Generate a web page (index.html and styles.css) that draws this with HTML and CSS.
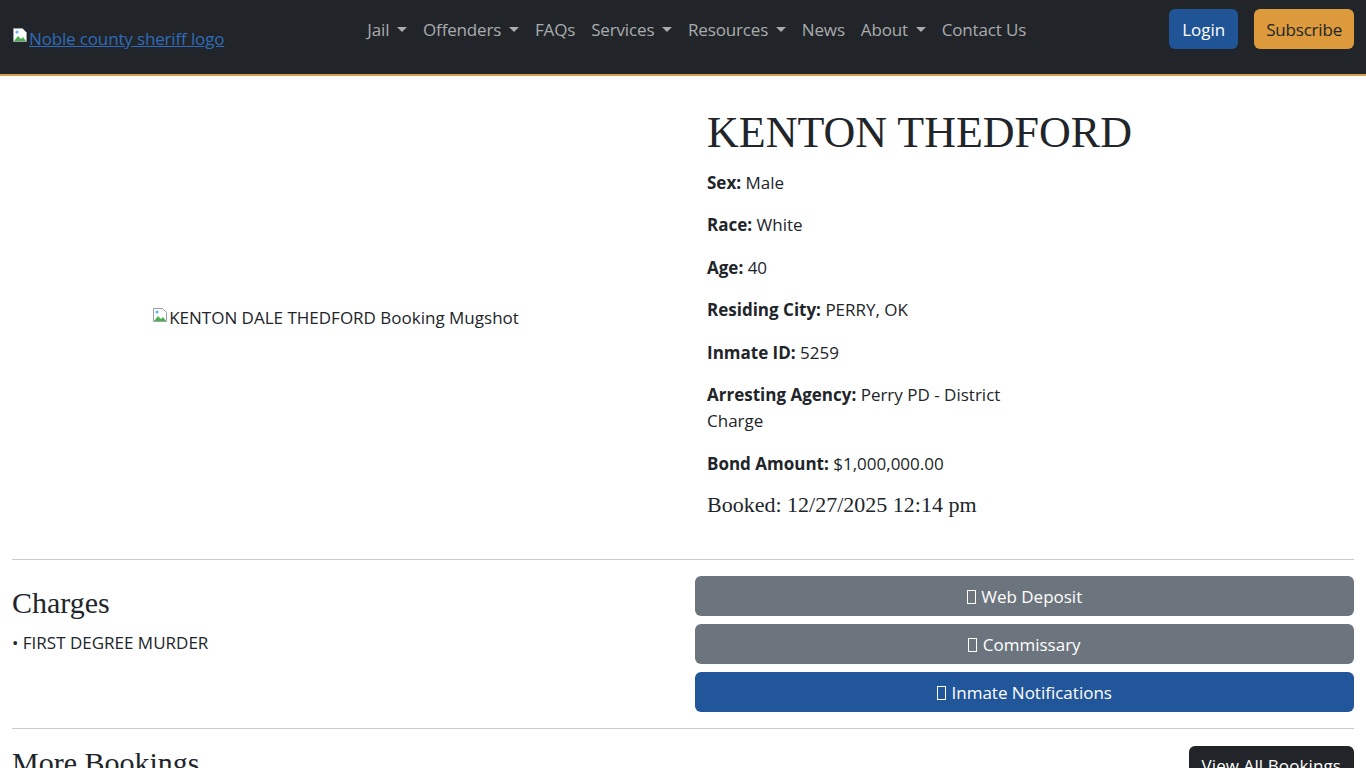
FILE: index.html
```html
<!DOCTYPE html>
<html lang="en">
<head>
<meta charset="utf-8">
<title>KENTON THEDFORD - Noble County Sheriff</title>
<link rel="stylesheet" href="styles.css">
</head>
<body>
<nav class="navbar">
  <a class="brand" href="#"><svg class="broken" width="16" height="16" viewBox="0 0 16 16"><path d="M1.5 1.5h9l4 4v9h-13z" fill="#fff" stroke="#9aa0a6"/><path d="M2 14l4-5 3 3 2-2 3 4z" fill="#4caf50"/><circle cx="5" cy="5" r="1.6" fill="#64b5f6"/></svg>Noble county sheriff logo</a>
  <ul class="nav-links">
    <li><a class="nav-link toggle" href="#">Jail</a></li>
    <li><a class="nav-link toggle" href="#">Offenders</a></li>
    <li><a class="nav-link" href="#">FAQs</a></li>
    <li><a class="nav-link toggle" href="#">Services</a></li>
    <li><a class="nav-link toggle" href="#">Resources</a></li>
    <li><a class="nav-link" href="#">News</a></li>
    <li><a class="nav-link toggle" href="#">About</a></li>
    <li><a class="nav-link" href="#">Contact Us</a></li>
  </ul>
  <div class="nav-actions">
    <a class="btn btn-login" href="#">Login</a>
    <a class="btn btn-subscribe" href="#">Subscribe</a>
  </div>
</nav>

<main class="container">
  <section class="top-row">
    <div class="mugshot">
      <span class="alt-img"><svg class="broken" width="16" height="16" viewBox="0 0 16 16"><path d="M1.5 1.5h9l4 4v9h-13z" fill="#fff" stroke="#9aa0a6"/><path d="M2 14l4-5 3 3 2-2 3 4z" fill="#4caf50"/><circle cx="5" cy="5" r="1.6" fill="#64b5f6"/></svg>KENTON DALE THEDFORD Booking Mugshot</span>
    </div>
    <div class="details">
      <h1 class="name">KENTON THEDFORD</h1>
      <div class="info">
        <p><strong>Sex:</strong> Male</p>
        <p><strong>Race:</strong> White</p>
        <p><strong>Age:</strong> 40</p>
        <p><strong>Residing City:</strong> PERRY, OK</p>
        <p><strong>Inmate ID:</strong> 5259</p>
        <p><strong>Arresting Agency:</strong> Perry PD - District Charge</p>
        <p><strong>Bond Amount:</strong> $1,000,000.00</p>
        <div class="booked">Booked: 12/27/2025 12:14 pm</div>
      </div>
    </div>
  </section>

  <hr class="divider">

  <section class="charges-row">
    <div class="charges">
      <h3 class="section-title">Charges</h3>
      <ul class="charge-list">
        <li>• FIRST DEGREE MURDER</li>
      </ul>
    </div>
    <div class="actions">
      <a class="btn btn-block btn-grey" href="#"><span class="tofu"></span> Web Deposit</a>
      <a class="btn btn-block btn-grey" href="#"><span class="tofu"></span> Commissary</a>
      <a class="btn btn-block btn-blue" href="#"><span class="tofu"></span> Inmate Notifications</a>
    </div>
  </section>

  <hr class="divider">

  <section class="more-row">
    <h3 class="section-title flat">More Bookings</h3>
    <a class="btn btn-dark" href="#">View All Bookings</a>
  </section>
</main>
</body>
</html>
```

FILE: styles.css
```css
* { box-sizing: border-box; }

html, body {
  margin: 0;
  padding: 0;
}

body {
  font-family: "Open Sans", "Noto Sans", sans-serif;
  font-size: 17px;
  line-height: 26.4px;
  color: #212529;
  background: #fff;
}

a { text-decoration: none; }

/* ---------- navbar ---------- */
.navbar {
  display: flex;
  align-items: flex-start;
  height: 76px;
  padding: 9px 12px 0;
  background: #212529;
  border-bottom: 2px solid #d4a24a;
}

.brand {
  display: inline-flex;
  align-items: center;
  margin-top: 17px;
  color: #2f6bb8;
  text-decoration: underline;
  font-size: 17px;
  line-height: 26px;
  letter-spacing: -0.15px;
}

.broken {
  flex: none;
  margin-right: 1px;
  position: relative;
  top: -4px;
}

.nav-links {
  display: flex;
  list-style: none;
  margin: 0 auto;
  padding: 0;
}

.nav-link {
  display: block;
  padding: 8px 8px 6px;
  color: #a9abad;
  font-size: 17px;
  line-height: 26px;
  letter-spacing: -0.15px;
}

.toggle::after {
  content: "";
  display: inline-block;
  margin-left: 0.45em;
  vertical-align: 0.22em;
  border-top: 0.3em solid;
  border-right: 0.3em solid transparent;
  border-left: 0.3em solid transparent;
}

.nav-actions {
  display: flex;
  gap: 16px;
}

.btn {
  display: inline-block;
  padding: 6px 12px;
  border-radius: 6px;
  font-size: 17px;
  line-height: 26px;
  text-align: center;
  border: 1px solid transparent;
}

.btn-login {
  background: #1f5597;
  color: #fff;
  padding: 7px 12px 5px;
}

.btn-subscribe {
  background: #dc9a3c;
  color: #212529;
  padding: 7px 11px 5px;
  letter-spacing: -0.2px;
}

/* ---------- main ---------- */
.container {
  padding: 0 12px;
}

.top-row {
  display: grid;
  grid-template-columns: 1fr 1fr;
  column-gap: 24px;
  padding: 29px 0 27px;
}

.mugshot {
  display: flex;
  align-items: center;
  justify-content: center;
  padding-right: 12px;
  padding-top: 16px;
}

.alt-img {
  display: inline-flex;
  align-items: center;
}

.details {
  padding-left: 12px;
}

.name {
  margin: 0 0 9px;
  font-family: "Liberation Serif", "Times New Roman", serif;
  font-weight: 400;
  font-size: 44px;
  line-height: 56px;
}

.info {
  width: 305px;
}

.info p {
  margin: 0 0 16px;
}

.info strong {
  font-weight: 700;
}

.booked {
  padding-top: 1px;
  font-family: "Liberation Serif", "Times New Roman", serif;
  font-size: 22px;
  line-height: 22px;
}

.divider {
  margin: 16px 0;
  border: 0;
  border-top: 1px solid #c9cacb;
}

.charges-row {
  display: grid;
  grid-template-columns: 1fr 1fr;
  column-gap: 24px;
}

.section-title {
  margin: 9px 0 9px;
  font-family: "Liberation Serif", "Times New Roman", serif;
  font-weight: 400;
  font-size: 30px;
  line-height: 36px;
}

.section-title.flat {
  margin: 0;
}

.charge-list {
  list-style: none;
  margin: 0;
  padding: 0;
}

.actions {
  display: flex;
  flex-direction: column;
  gap: 8px;
}

.btn-block {
  display: block;
  width: 100%;
  color: #fff;
  padding-top: 7px;
  padding-bottom: 5px;
}

.btn-grey { background: #6c757d; }
.btn-blue { background: #22569a; }

.tofu {
  display: inline-block;
  width: 9px;
  height: 14px;
  border: 1px solid #fff;
  vertical-align: -1px;
  margin-right: 1px;
}

.more-row {
  display: flex;
  justify-content: space-between;
  align-items: flex-start;
}

.btn-dark {
  margin-top: 1px;
  background: #212529;
  color: #fff;
  letter-spacing: 0.1px;
}
```
